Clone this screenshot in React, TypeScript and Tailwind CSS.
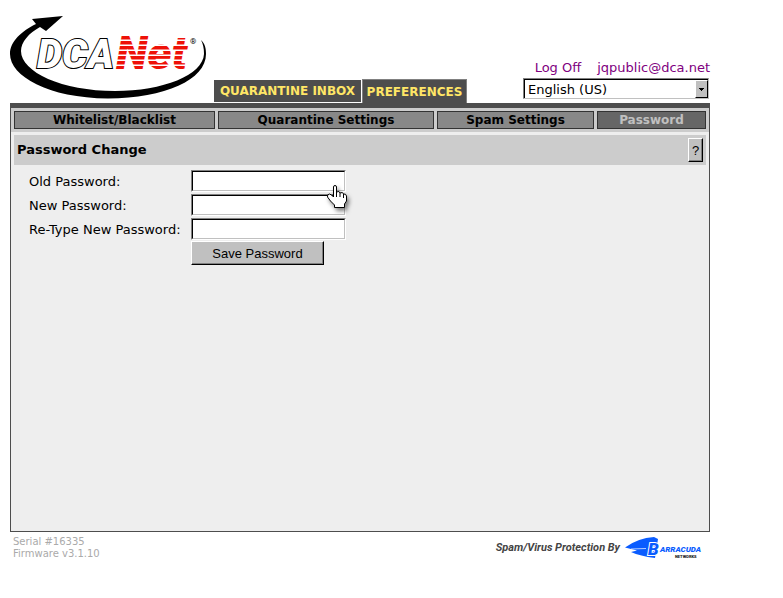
import type {ReactNode} from "react";

const NAV_ITEMS = ['Whitelist/Blacklist', 'Quarantine Settings', 'Spam Settings', 'Password'];

const PASSWORD_FIELDS = [
  {id: 'old', label: 'Old Password:'},
  {id: 'new', label: 'New Password:'},
  {id: 'retype', label: 'Re-Type New Password:'},
];

export default function App() {
  return (
    <div className="min-h-screen flex flex-col bg-white pl-[10px] pr-[73px] font-['DejaVu_Sans',Verdana,sans-serif] text-[13px] text-black">
      <Header/>
      <main className="flex-1 bg-[#eeeeee] border border-t-0 border-[#4d4d4d]">
        <SubNav/>
        <div className="px-[3px] pt-[3px]">
          <div className="flex items-center justify-between h-[30px] bg-[#cccccc] px-[3px]">
            <h1 className="font-bold leading-[20px]">Password Change</h1>
            <button
              type="button"
              className="w-[15px] h-[24px] bg-[#c0c0c0] border border-t-white border-l-white border-r-black border-b-black shadow-[inset_-1px_-1px_0_#808080] font-['Liberation_Sans',sans-serif] leading-none"
            >
              ?
            </button>
          </div>
        </div>
        <PasswordForm/>
      </main>
      <Footer/>
    </div>
  );
}

function Header() {
  return (
    <header className="flex items-end h-[108px] border-b-[5px] border-[#4d4d4d]">
      <a href="#home" aria-label="DCANet" className="w-[204px] shrink-0 self-start pt-[10px]">
        <DcaLogo/>
      </a>
      <nav className="flex items-end">
        <Tab className="w-[147px] h-[22px] mb-px mr-px">QUARANTINE INBOX</Tab>
        <Tab className="w-[105px] h-[24px] border border-b-0 border-[#808080]">PREFERENCES</Tab>
      </nav>
      <div className="ml-auto flex flex-col items-end">
        <div className="flex gap-4 text-[#800080] leading-[20px]">
          <a href="#logoff">Log Off</a>
          <a href="#account">jqpublic@dca.net</a>
        </div>
        <LanguageSelect/>
      </div>
    </header>
  );
}

function Tab({children, className}: {children: ReactNode; className: string}) {
  return (
    <a
      href="#tab"
      className={`flex items-center justify-center bg-[#4d4d4d] text-[#ffe666] font-bold text-[12px] whitespace-nowrap ${className}`}
    >
      {children}
    </a>
  );
}

function LanguageSelect() {
  return (
    <div className="relative w-[186px] mr-px mb-[4px] border border-t-[#808080] border-l-[#808080] border-r-[#c0c0c0] border-b-[#c0c0c0]">
      <select
        aria-label="Language"
        className="block appearance-none w-full h-[19px] pl-[3px] bg-white border-t border-l border-black"
      >
        <option>English (US)</option>
      </select>
      <div className="absolute right-0 top-px bottom-0 w-[13px] flex items-center justify-center pointer-events-none bg-[#c0c0c0] border border-t-white border-l-white border-r-black border-b-black">
        <svg width="5" height="3" viewBox="0 0 5 3" shapeRendering="crispEdges">
          <path d="M0 0H5V1H4V2H3V3H2V2H1V1H0Z"/>
        </svg>
      </div>
    </div>
  );
}

function SubNav() {
  return (
    <nav className="grid grid-cols-[201fr_216fr_157fr_109fr] gap-[3px] p-[3px] bg-[#cccccc] font-bold text-[12px]">
      {NAV_ITEMS.map((item) => (
        <a
          key={item}
          href="#nav"
          className={`h-[18px] leading-[17px] text-center border border-[#333333] ${item === 'Password' ? 'bg-[#666666] text-[#c0c0c0]' : 'bg-[#888888]'}`}
        >
          {item}
        </a>
      ))}
    </nav>
  );
}

function PasswordForm() {
  return (
    <form className="pl-[18px] pt-[5px]">
      <div className="grid grid-cols-[162px_1fr] gap-y-[2px]">
        {PASSWORD_FIELDS.map((field) => (
          <div key={field.id} className="contents">
            <label htmlFor={field.id} className="leading-[24px] h-[22px] whitespace-nowrap">{field.label}</label>
            <div className="relative w-[155px] border border-t-[#808080] border-l-[#808080] border-r-white border-b-white">
              <input
                id={field.id}
                type="password"
                className="block w-full h-[20px] px-[2px] bg-white border border-t-black border-l-black border-r-[#c0c0c0] border-b-[#c0c0c0] outline-none"
              />
              {field.id === 'old' && <HandPointer/>}
            </div>
          </div>
        ))}
      </div>
      <button
        type="button"
        className="block ml-[162px] mt-px w-[133px] h-[24px] bg-[#c0c0c0] border border-t-white border-l-white border-r-black border-b-black shadow-[inset_-1px_-1px_0_#808080] font-['Liberation_Sans',sans-serif] leading-none"
      >
        Save Password
      </button>
    </form>
  );
}

function HandPointer() {
  return (
    <svg
      className="absolute left-[134px] top-[13px] z-10 drop-shadow-[2px_3px_2px_rgba(0,0,0,0.5)]"
      width="22" height="26" viewBox="0 0 22 26"
    >
      <path
        d="M7.5 13V3Q7.500 1.500 9 1.500T10.500 3V8Q13.500 6.500 14 9Q17 7.500 17.500 10Q20 9.500 20.500 12V17L18.500 20V23.500H8.500V21L4.500 17L1.500 13Q1 10 3.500 10Q5.500 10.500 7.500 13Z"
        fill="#fff" stroke="#000"
      />
      <path d="M10.500 8V13M14 9V13M17.500 10V14" stroke="#000"/>
    </svg>
  );
}

function Footer() {
  return (
    <footer className="flex justify-between h-[66px] pt-[4px] pl-[3px] pr-[7px]">
      <div className="text-[10px] leading-[12px] text-[#aaaaaa]">
        Serial #16335<br/>Firmware v3.1.10
      </div>
      <a href="#barracuda" className="flex items-start gap-[5px]">
        <span className="font-[Roboto,sans-serif] italic font-bold text-[11px] leading-[24px] text-[#444444]">
          Spam/Virus Protection By
        </span>
        <BarracudaLogo/>
      </a>
    </footer>
  );
}

function DcaLogo() {
  return (
    <svg width="200" height="92" viewBox="10 10 200 92" fontFamily="Roboto, sans-serif" fontWeight="900" fontStyle="italic">
      <defs>
        <pattern id="stripes" width="10" height="5" patternUnits="userSpaceOnUse" y="36">
          <rect width="10" height="3.500" fill="#ee1108"/>
        </pattern>
      </defs>
      <path
        d="M63 16L32 19L36 24C22 31 10 41 10 54C10 76 48 98 108 98.500C165 98 206 80 206 54C206 48 205 44 201 40C203 44 204 48 204 54C203 75 163 91 115 91C62 91 21 72 21 51C21 42 29 33 40 27L46 31Z"
      />
      <text x="37" y="68" fontSize="40" fill="#fff" stroke="#000" strokeWidth="2" paintOrder="stroke">DCA</text>
      <text x="116" y="69" fontSize="46" fill="url(#stripes)">Net</text>
      <text x="190" y="44" fontSize="8" fontWeight="400" fontStyle="normal">®</text>
    </svg>
  );
}

function BarracudaLogo() {
  return (
    <svg width="78" height="24" viewBox="625 536 78 24" fontFamily="Roboto, sans-serif" fontWeight="900">
      <path d="M625 547.500Q638 538 654 537L658 539L655 558Q640 556 631 552L637 550.500Z" fill="#0a5cff"/>
      <path d="M631 549L646 548.500" stroke="#fff" strokeWidth="0.700"/>
      <text x="648" y="555" fontSize="17" fontStyle="italic" fill="#0a5cff" stroke="#fff" strokeWidth="2" paintOrder="stroke">B</text>
      <text x="660" y="552" fontSize="8" fontStyle="italic" fill="#0a5cff">ARRACUDA</text>
      <text x="675" y="558" fontSize="4" fill="#222">NETWORKS</text>
    </svg>
  );
}
